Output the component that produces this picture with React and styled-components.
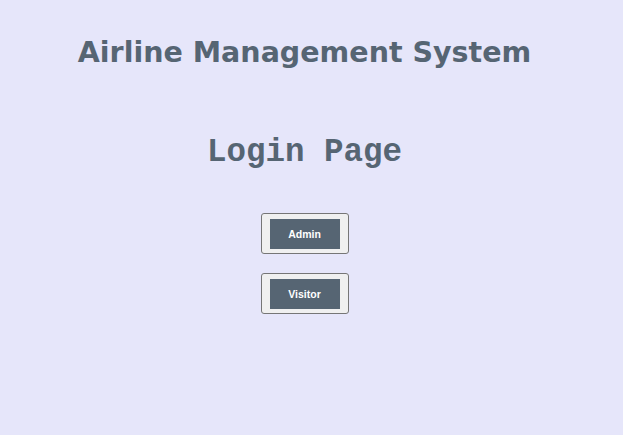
import React from "react";
import styled, { createGlobalStyle } from "styled-components";

const GlobalStyle = createGlobalStyle`
  html, body {
    margin: 0;
    padding: 0;
    background: #e6e6fa;
  }
`;

const Page = styled.div`
  width: 609px;
  height: 435px;
  display: flex;
  flex-direction: column;
  align-items: center;
  color: #566573;
`;

const Title = styled.h1`
  margin: 33px 0 0;
  font-family: "DejaVu Sans", Verdana, sans-serif;
  font-weight: bold;
  font-size: 28.5px;
  line-height: 40px;
`;

const Subtitle = styled.h2`
  margin: 60px 0 0;
  font-family: "Liberation Mono", "Courier New", monospace;
  font-weight: bold;
  font-size: 32.5px;
  line-height: 40px;
`;

const ButtonList = styled.div`
  margin-top: 40px;
  display: flex;
  flex-direction: column;
  gap: 19px;
`;

const OuterButton = styled.button`
  box-sizing: border-box;
  width: 88px;
  height: 41px;
  padding: 0;
  display: flex;
  align-items: center;
  justify-content: center;
  background: #f0f0f0;
  border: 1px solid #767676;
  border-radius: 3px;
  cursor: pointer;
`;

const Label = styled.span`
  width: 70px;
  height: 30px;
  display: flex;
  align-items: center;
  justify-content: center;
  background: #566573;
  color: #ffffff;
  font-family: "Liberation Sans", Arial, sans-serif;
  font-weight: bold;
  font-size: 10.5px;
`;

export default function App() {
  return (
    <>
      <GlobalStyle />
      <Page>
        <Title>Airline Management System</Title>
        <Subtitle>Login Page</Subtitle>
        <ButtonList>
          <OuterButton>
            <Label>Admin</Label>
          </OuterButton>
          <OuterButton>
            <Label>Visitor</Label>
          </OuterButton>
        </ButtonList>
      </Page>
    </>
  );
}
